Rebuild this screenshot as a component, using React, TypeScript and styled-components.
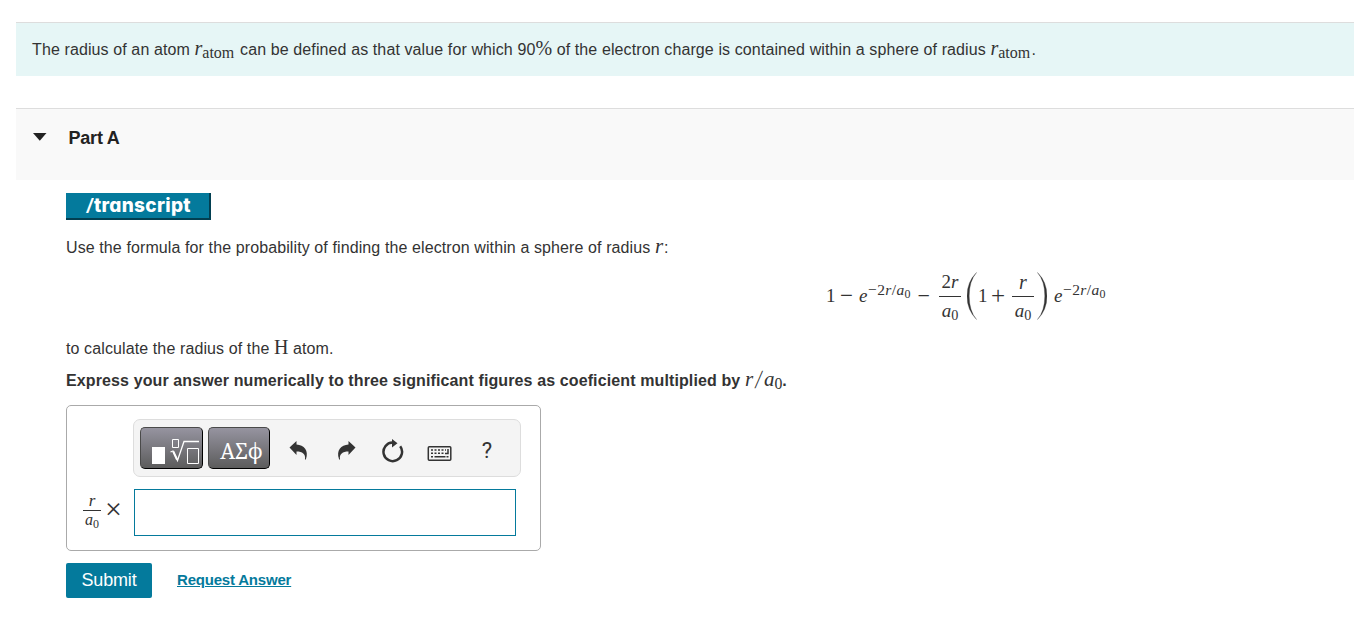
import React, {FC, ReactNode} from 'react'
import styled, {createGlobalStyle} from 'styled-components'

const GlobalStyle = createGlobalStyle`
  * {
    box-sizing: border-box;
  }
  body {
    margin: 0;
    background: #fff;
    color: #333;
    font-family: "Liberation Sans", Arial, sans-serif;
    font-size: 16px;
    overflow: hidden;
  }
`

const Page = styled.main`
  height: 617px;
  padding: 22px 0 0 16px;
`

const Intro = styled.section`
  background: #e6f6f6;
  border-top: 1px solid #ddd;
  height: 54px;
  padding: 14px 16px 0;
`

const PartHeader = styled.header`
  align-items: flex-start;
  background: #f9f9f9;
  border-top: 1px solid #ddd;
  display: flex;
  height: 72px;
  margin-top: 32px;
  padding: 19px 0 0 16px;
`

const Caret = styled.svg`
  display: block;
  margin: 5px 21.500px 0 1px;
`

const PartTitle = styled.h2`
  color: #222;
  font-size: 18px;
  font-weight: bold;
  letter-spacing: -0.2px;
  line-height: 20px;
  margin: 0;
`

const Content = styled.div`
  padding: 13px 0 0 50px;
`

const Transcript = styled.button`
  background: #047a9c;
  border: 0;
  border-bottom: 2px solid #023f51;
  border-right: 2px solid #023f51;
  color: #fff;
  display: block;
  font: 800 19px/25px Inter, sans-serif;
  font-feature-settings: "cv11";
  height: 27px;
  letter-spacing: 0.3px;
  padding: 0 0 0 2px;
  text-align: center;
  width: 145px;
`

const Slant = styled.span`
  display: inline-block;
  font-style: italic;
  transform: scale(0.8, 0.9);
`

const Line = styled.p<{$top?: number; $bold?: boolean; $spacing?: number}>`
  display: flex;
  align-items: baseline;
  font-weight: ${props => props.$bold ? 'bold' : 'normal'};
  height: 26px;
  letter-spacing: ${props => props.$spacing || 0}px;
  line-height: 26px;
  margin: ${props => props.$top || 0}px 0 0;
  white-space: pre;
`

const Math = styled.span<{$w?: number; $size?: number; $italic?: boolean; $line?: number}>`
  display: inline-block;
  flex: none;
  font-family: "Liberation Serif", "Times New Roman", serif;
  font-size: ${props => props.$size || 19}px;
  font-style: ${props => props.$italic ? 'italic' : 'normal'};
  font-weight: normal;
  letter-spacing: 0;
  line-height: ${props => props.$line || 20}px;
  white-space: pre;
  width: ${props => props.$w ? `${props.$w}px` : 'auto'};
`

const Sub = styled.span<{$size?: number}>`
  display: inline-block;
  font-size: ${props => props.$size || 14}px;
  font-style: normal;
  line-height: 1;
  transform: translateY(3px);
`

const Slash = styled.span`
  display: inline-block;
  margin-left: 3px;
  transform: skewX(-9deg) scaleY(1.25);
`

const Formula = styled.div`
  align-items: center;
  display: flex;
  height: 48px;
  margin: 11px 0 0 760px;
`

const Exponent = styled(Math)`
  letter-spacing: 0.4px;
  transform: translateY(-6px);
`

const FractionBox = styled.span<{$w: number; $gap: number}>`
  align-items: center;
  display: flex;
  flex: none;
  flex-direction: column;
  width: ${props => props.$w}px;

  > i {
    background: #333;
    height: 1px;
    margin: ${props => props.$gap}px 0;
    width: 100%;
  }
`

const ParenIcon = styled.svg<{$space: string}>`
  display: block;
  flex: none;
  margin: ${props => props.$space};
`

const AnswerBox = styled.div`
  border: 1px solid #aaa;
  border-radius: 5px;
  height: 146px;
  margin-top: 11px;
  padding: 13px 0 0 16px;
  width: 475px;
`

const Toolbar = styled.div`
  align-items: center;
  background: #f4f4f4;
  border: 1px solid #ddd;
  border-radius: 7px;
  display: flex;
  height: 58px;
  margin-left: 50px;
  padding: 0 6px 1px;
  width: 388px;
`

const DarkButton = styled.button<{$w: number}>`
  align-items: center;
  background: linear-gradient(#9694a0, #5c5c5c);
  border: 1px solid;
  border-color: #4a4a4a #000 #000 #4a4a4a;
  border-radius: 5px;
  color: #fff;
  display: flex;
  flex: none;
  font: 21px/30px "Noto Serif", "Liberation Serif", serif;
  height: 42px;
  justify-content: center;
  margin-right: 5px;
  padding: 7px 0 0 5px;
  width: ${props => props.$w}px;
`

const IconButton = styled.button<{$left: number}>`
  background: none;
  border: 0;
  color: #333;
  flex: none;
  font: 22px/24px Roboto, sans-serif;
  height: 24px;
  margin: 6px 0 0 ${props => props.$left}px;
  padding: 0;
  width: 26px;

  svg {
    display: block;
  }
`

const AnswerRow = styled.div`
  align-items: center;
  display: flex;
  height: 47px;
  margin-top: 12px;

  ${FractionBox} {
    margin-bottom: 5px;
  }
`

const Times = styled(Math)`
  margin: -7px 0 0 4px;
`

const AnswerInput = styled.input`
  border: 1px solid #047a9c;
  height: 47px;
  margin-left: auto;
  margin-right: 24px;
  outline: 0;
  width: 382px;
`

const Actions = styled.div`
  align-items: center;
  display: flex;
  margin-top: 12px;
`

const Submit = styled.button`
  background: #047a9c;
  border: 0;
  border-radius: 2px;
  color: #fff;
  font: 18px/34px "Liberation Sans", Arial, sans-serif;
  height: 35px;
  letter-spacing: -0.15px;
  padding: 0 0 1px;
  width: 86px;
`

const Request = styled.a`
  color: #047a9c;
  font-size: 15px;
  font-weight: bold;
  letter-spacing: -0.2px;
  margin: -2px 0 0 25px;
  text-decoration: underline;
`

const RadiusAtom: FC = () => (
  <Math $w={41} $italic $size={20}>r<Sub $size={16}>atom</Sub></Math>
)

const BohrRadius: FC<{size?: number; line?: number}> = ({size = 19, line}) => (
  <Math $italic $size={size} $line={line}>a<Sub $size={size * 0.75}>0</Sub></Math>
)

interface FractionProps {
  top: ReactNode
  bottom: ReactNode
  width: number
  gap?: number
}

const Fraction: FC<FractionProps> = ({top, bottom, width, gap = 4}) => (
  <FractionBox $w={width} $gap={gap}>
    {top}
    <i/>
    {bottom}
  </FractionBox>
)

const Power: FC = () => (
  <Exponent $size={15.5} $w={44}>
    −2<em>r</em>/<em>a</em><Sub $size={12}>0</Sub>
  </Exponent>
)

const Paren: FC<{flip?: boolean}> = ({flip}) => (
  <ParenIcon $space={flip ? '0 7px 0 3px' : '0 1px 0 6px'} width="10" height="48" viewBox="0 0 10 48">
    <path
      d={flip ? 'M.5.5Q7.8 9 7.8 24T.5 47.5Q10 38 10 24T.5.5' : 'M9.5.5Q2.2 9 2.2 24t7.3 23.5Q0 38 0 24T9.5.5'}
      fill="#333"
      stroke="#333"
      strokeWidth=".3"
    />
  </ParenIcon>
)

const RootIcon: FC = () => (
  <svg width="50" height="30" viewBox="0 0 50 30" fill="none" stroke="#fff">
    <path d="M3 11h13v17H3z" fill="#fff" stroke="none"/>
    <path d="M23.500 3.500h6v8h-6zM38.500 12.500h11v15h-11z"/>
    <path d="M21.500 16l2.500-1 4.500 9.500L35 5.500H50" strokeWidth="1.300"/>
    <path d="M24.300 15.500l3.700 8" strokeWidth="2"/>
  </svg>
)

const UndoIcon: FC<{flip?: boolean}> = ({flip}) => (
  <svg width="26" height="24" viewBox="0 0 26 24">
    <path
      d="M4.500 8.500L11.500 2v3.500C19 6 24 11.500 21 20c-.7 1.300-1.300.8-1 0C20.700 15 17.500 12.500 11.500 12.500V16z"
      fill="#333"
      transform={flip ? 'matrix(-1 0 0 1 27 0)' : undefined}
    />
  </svg>
)

const ResetIcon: FC = () => (
  <svg width="26" height="24" viewBox="0 0 26 24">
    <path d="M21.200 7.200A9.300 9.300 0 1 1 13.500 3.500" fill="none" stroke="#333" strokeWidth="2.500"/>
    <path d="M13 0l5.500 4.200L13 8.500z" fill="#333"/>
  </svg>
)

const KeyboardIcon: FC = () => (
  <svg width="26" height="24" viewBox="0 0 26 24" fill="none" stroke="#333">
    <rect x="2.300" y="7.700" width="22.500" height="13.500" rx="1" strokeWidth="1.500"/>
    <path d="M5 11h15M5 14.200h14" strokeWidth="1.500" strokeDasharray="2 1.500"/>
    <path d="M22 10v4.500h-3M5 17.800h2M8.500 17.800h11M20.500 17.800h2" strokeWidth="1.500"/>
  </svg>
)

const App: FC = () => (
  <>
    <GlobalStyle/>
    <Page>
      <Intro>
        <Line $spacing={0.11}>
          <span>The radius of an atom </span>
          <RadiusAtom/>
          <span> can be defined as that value for which 90</span>
          <Math $size={20}>%</Math>
          <span> of the electron charge is contained within a sphere of radius </span>
          <RadiusAtom/>
          <span>.</span>
        </Line>
      </Intro>
      <PartHeader>
        <Caret width="14" height="8" viewBox="0 0 14 8">
          <path d="M0 0h13.500L6.800 7.700z" fill="#222"/>
        </Caret>
        <PartTitle>Part A</PartTitle>
      </PartHeader>
      <Content>
        <Transcript><Slant>/</Slant>transcript</Transcript>
        <Line $top={15} $spacing={0.105}>
          <span>Use the formula for the probability of finding the electron within a sphere of radius </span>
          <Math $italic $size={21} $w={9}>r</Math>
          <span>:</span>
        </Line>
        <Formula>
          <Math $w={14}>1</Math>
          <Math $w={19} $size={23}>−</Math>
          <Math $w={9} $italic>e</Math>
          <Power/>
          <Math $w={27} $size={22}> − </Math>
          <Fraction
            width={22}
            top={<Math>2<em>r</em></Math>}
            bottom={<BohrRadius/>}
          />
          <Paren/>
          <Math $w={13}>1</Math>
          <Math $w={21} $size={25}>+</Math>
          <Fraction
            width={22}
            top={<Math $italic $size={20}>r</Math>}
            bottom={<BohrRadius/>}
          />
          <Paren flip/>
          <Math $w={9} $italic>e</Math>
          <Power/>
        </Formula>
        <Line $top={16} $spacing={0.11}>
          <span>to calculate the radius of the </span>
          <Math $size={20}>H</Math>
          <span> atom.</span>
        </Line>
        <Line $top={6} $bold $spacing={0.115}>
          <span>Express your answer numerically to three significant figures as coeficient multiplied by </span>
          <Math $size={21} $w={19}><em>r</em><Slash>/</Slash></Math>
          <BohrRadius size={21}/>
          <span>.</span>
        </Line>
        <AnswerBox>
          <Toolbar>
            <DarkButton $w={63}><RootIcon/></DarkButton>
            <DarkButton $w={62}>ΑΣϕ</DarkButton>
            <IconButton $left={10}><UndoIcon/></IconButton>
            <IconButton $left={22}><UndoIcon flip/></IconButton>
            <IconButton $left={20}><ResetIcon/></IconButton>
            <IconButton $left={21}><KeyboardIcon/></IconButton>
            <IconButton $left={22}>?</IconButton>
          </Toolbar>
          <AnswerRow>
            <Fraction
              width={18}
              gap={2}
              top={<Math $italic $size={17} $line={14}>r</Math>}
              bottom={<BohrRadius size={16} line={14}/>}
            />
            <Times $size={30}>×</Times>
            <AnswerInput/>
          </AnswerRow>
        </AnswerBox>
        <Actions>
          <Submit>Submit</Submit>
          <Request>Request Answer</Request>
        </Actions>
      </Content>
    </Page>
  </>
)

export default App
